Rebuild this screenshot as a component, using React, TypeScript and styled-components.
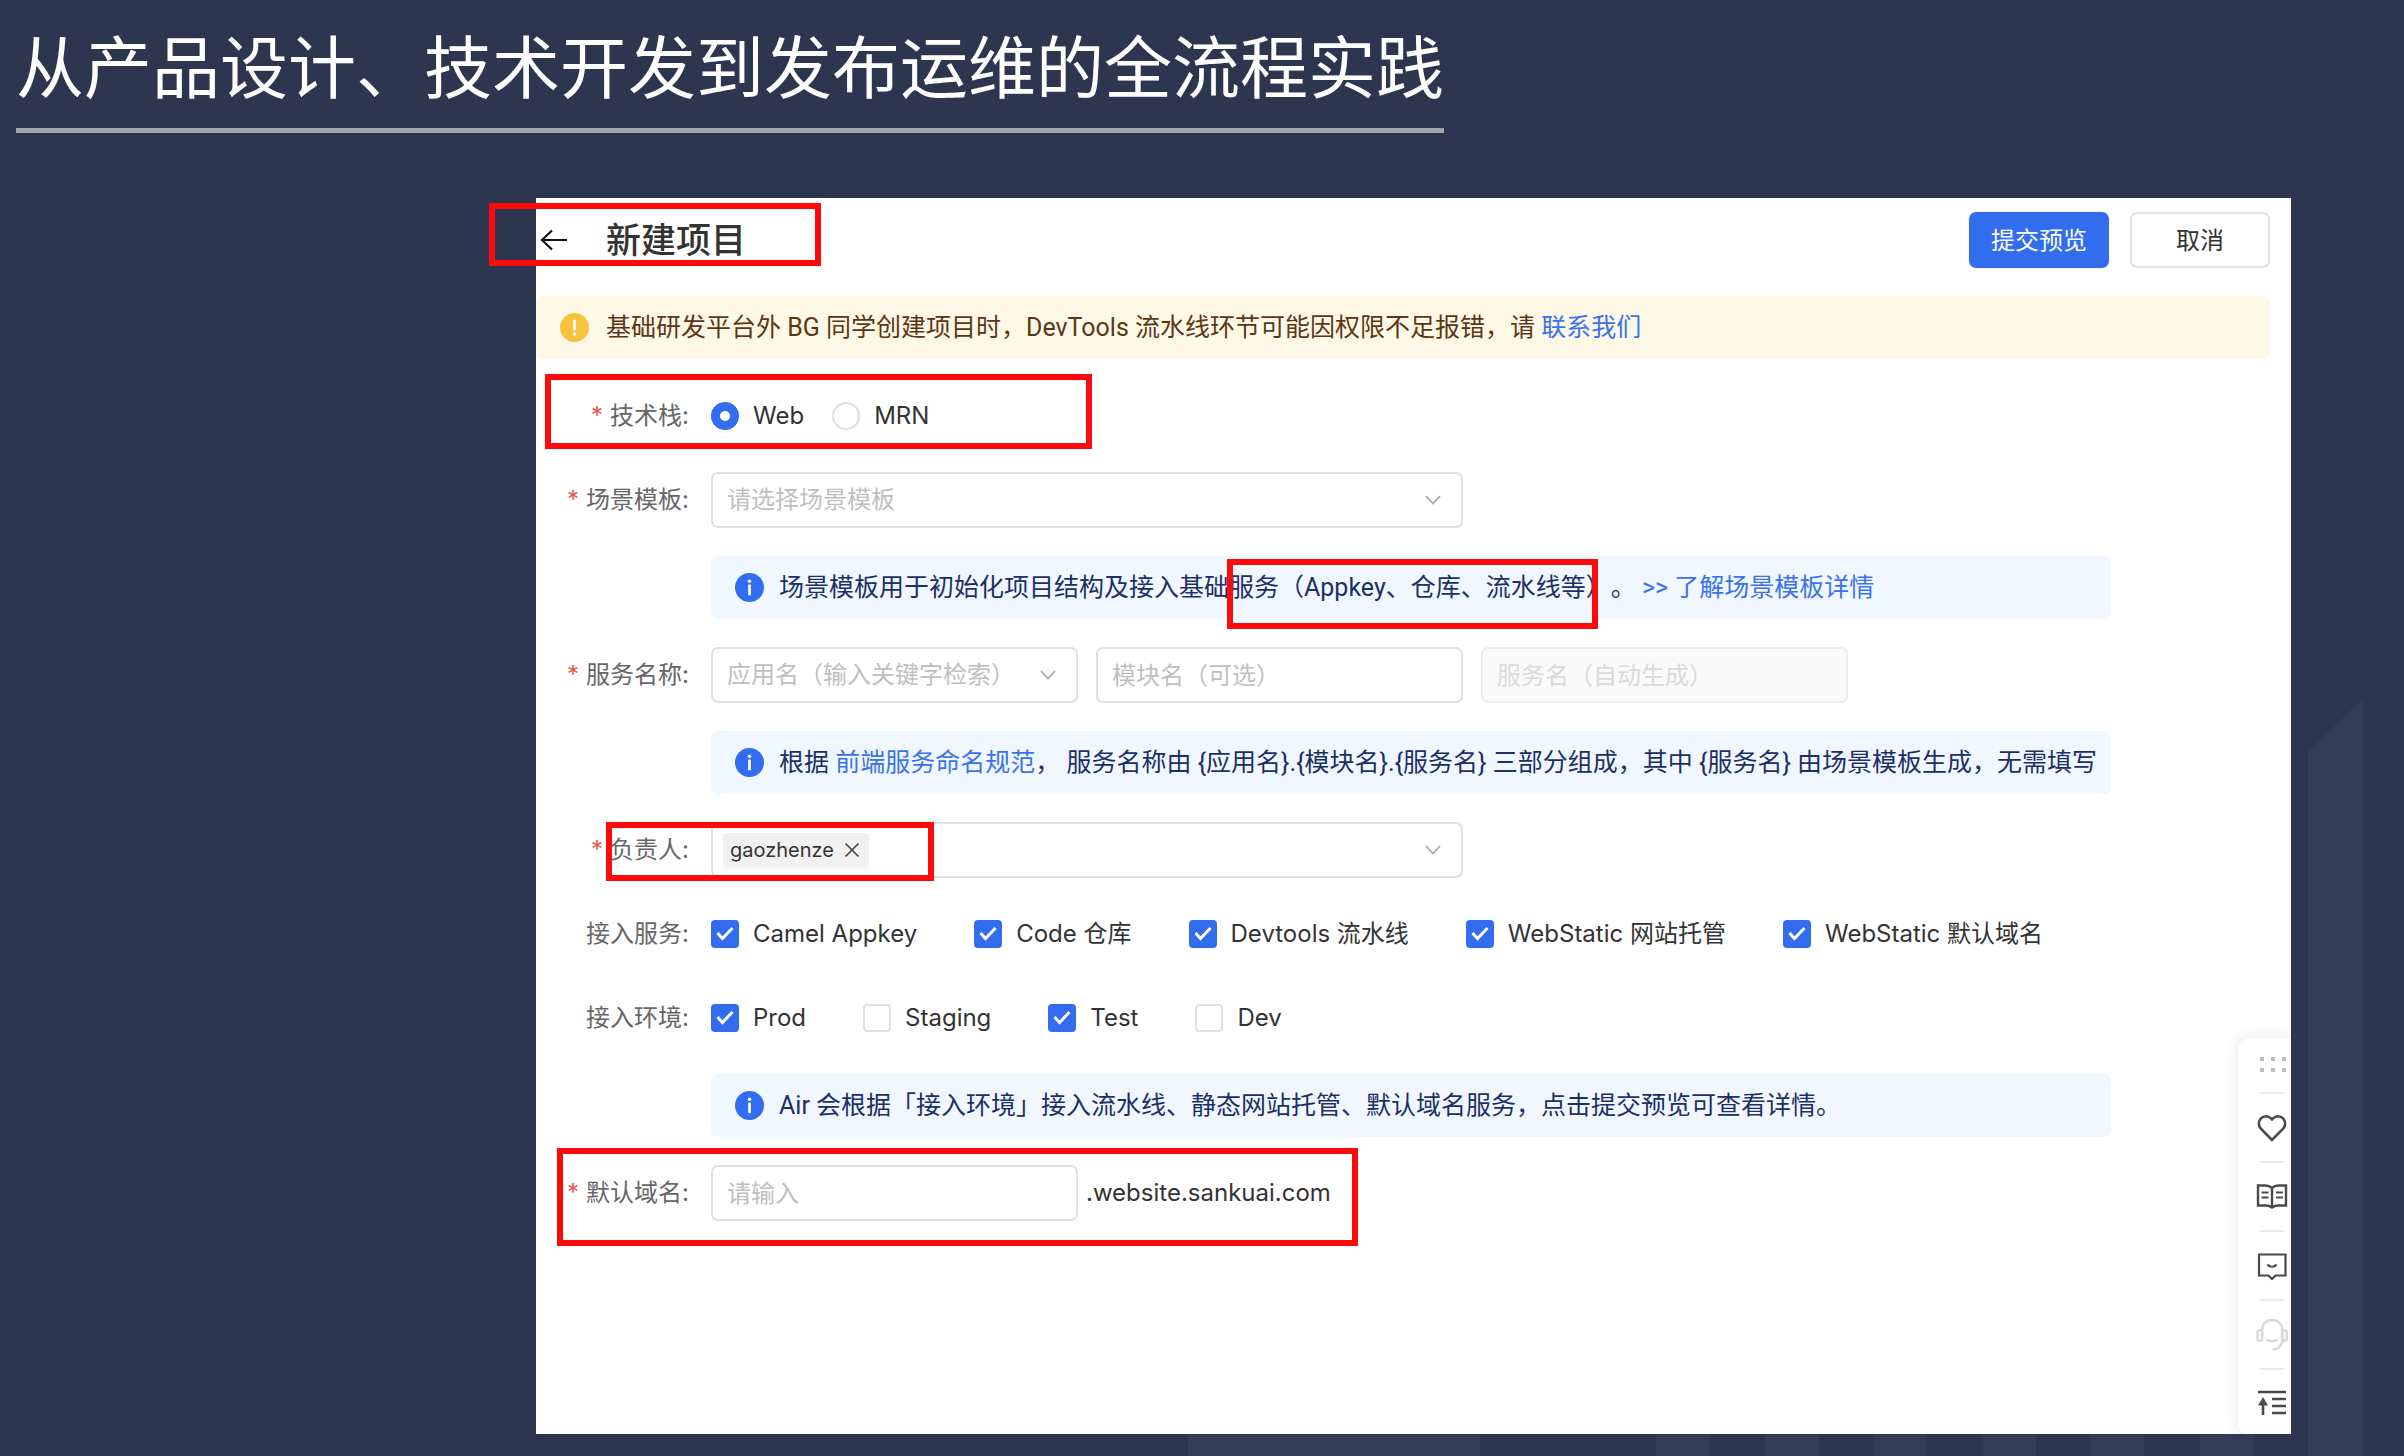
import React, { useState } from "react";
import styled, { createGlobalStyle, css } from "styled-components";

const BLUE = "#316dee";

const GlobalStyle = createGlobalStyle`
  *, *::before, *::after { box-sizing: border-box; }
  body {
    margin: 0;
    background: #2c374f;
    font-family: Inter, "Noto Sans CJK SC", sans-serif;
    font-size: 24px;
    line-height: 36px;
    color: #333;
    text-spacing-trim: space-all;
  }
  button, input, select { font: inherit; color: inherit; margin: 0; }
  a { color: #3a72ee; text-decoration: none; }
  svg { display: block; flex: none; }
`;

const Slide = styled.div`
  position: relative;
  display: flex;
  flex-direction: column;
  min-height: 100vh;
  padding: 16px 113px 22px 16px;
  overflow: hidden;
`;

const Backdrop = styled.svg`
  position: absolute;
  right: 0;
  bottom: 0;
  fill: #323d55;
`;

const SlideTitle = styled.h1`
  align-self: flex-start;
  margin: 0 0 65px;
  padding-bottom: 16px;
  border-bottom: 5px solid #a3a6ab;
  color: #fff;
  font-family: "Noto Sans CJK SC", sans-serif;
  font-size: 68px;
  line-height: 96px;
  font-weight: 400;
  white-space: nowrap;
`;

const Panel = styled.main`
  position: relative;
  flex: 1;
  display: flex;
  flex-direction: column;
  gap: 28px;
  margin-left: 520px;
  padding: 14px 21px 28px 0;
  background: #fff;
`;

const Header = styled.header`
  display: flex;
  align-items: center;
  gap: 21px;
`;

const BackButton = styled.button`
  display: flex;
  padding: 0;
  margin: 0 17px 0 4px;
  border: 0;
  background: none;
  color: #111;
`;

const PageTitle = styled.h2`
  flex: 1;
  margin: 0;
  font-size: 35px;
  line-height: 56px;
  font-weight: 500;
`;

const Button = styled.button<{ $primary?: boolean }>`
  width: 140px;
  height: 56px;
  padding: 1px 0 0;
  border: 2px solid ${(p) => (p.$primary ? BLUE : "#e2e2e2")};
  border-radius: 7px;
  background: ${(p) => (p.$primary ? BLUE : "#fff")};
  color: ${(p) => (p.$primary ? "#fff" : "#333")};
`;

const Notice = styled.p<{ $warning?: boolean }>`
  display: flex;
  align-items: center;
  gap: ${(p) => (p.$warning ? 17 : 15)}px;
  min-height: 63px;
  margin: 0;
  padding: 0 12px 0 24px;
  border-radius: 7px;
  background: ${(p) => (p.$warning ? "#fef8e6" : "#f0f7ff")};
  color: ${(p) => (p.$warning ? "#5c3614" : "#1c2f66")};
  font-family: Roboto, "Noto Sans CJK SC", sans-serif;
  font-size: 25px;
`;

const Form = styled.form`
  display: grid;
  grid-template-columns: 153px minmax(0, 1400px);
  column-gap: 22px;
  row-gap: 28px;
  margin-top: 1px;
`;

const Label = styled.label<{ $required?: boolean }>`
  display: flex;
  align-items: center;
  justify-content: flex-end;
  gap: 7px;
  height: 56px;
  color: #666;
  white-space: nowrap;
  ${(p) =>
    p.$required &&
    css`
      &::before {
        content: "*";
        color: #e8584f;
      }
    `}
`;

const Field = styled.div<{ $gap?: number }>`
  grid-column: 2;
  display: flex;
  align-items: center;
  gap: ${(p) => p.$gap ?? 18}px;
  min-height: 56px;
`;

const HelpRow = styled.div`
  grid-column: 2;
`;

const control = css`
  width: 100%;
  height: 56px;
  padding: 0 14px;
  border: 2px solid #e0e0e0;
  border-radius: 7px;
  background: #fff;
  outline: 0;
`;

const ControlBox = styled.div<{ $wide?: boolean }>`
  display: grid;
  align-items: center;
  width: ${(p) => (p.$wide ? 752 : 367)}px;
  & > * {
    grid-area: 1 / 1;
  }
  & > svg {
    justify-self: end;
    margin-right: 22px;
    pointer-events: none;
  }
`;

const SelectInput = styled.select`
  ${control}
  appearance: none;
  color: #bfbfbf;
`;

const TextInput = styled.input`
  ${control}
  &::placeholder {
    color: #bfbfbf;
    opacity: 1;
  }
  &:disabled {
    background: #fafafa;
    border-color: #ececec;
  }
  &:disabled::placeholder {
    color: #dadada;
  }
`;

const TagBox = styled.div`
  ${control}
  display: flex;
  align-items: center;
  padding: 0 56px 0 10px;
`;

const Tag = styled.span`
  display: flex;
  align-items: center;
  gap: 10px;
  height: 35px;
  padding: 0 9px 0 7px;
  border-radius: 4px;
  background: #f1f1f1;
  font-size: 20px;
`;

const TagRemove = styled.button`
  display: flex;
  padding: 0;
  border: 0;
  background: none;
`;

const TagSearch = styled.input`
  flex: 1;
  min-width: 0;
  border: 0;
  outline: 0;
  background: none;
`;

const Option = styled.label`
  display: flex;
  align-items: center;
  gap: 14px;
  white-space: nowrap;
`;

const Radio = styled.input`
  appearance: none;
  width: 28px;
  height: 28px;
  border: 2px solid #e0e0e0;
  border-radius: 50%;
  background: #fff;
  &:checked {
    border: 9px solid ${BLUE};
  }
`;

const Tick = styled.span`
  display: grid;
  place-items: center;
  & > * {
    grid-area: 1 / 1;
  }
  & > svg {
    pointer-events: none;
  }
`;

const TickInput = styled.input`
  appearance: none;
  width: 28px;
  height: 28px;
  border: 2px solid #e0e0e0;
  border-radius: 4px;
  background: #fff;
  &:checked {
    border-color: ${BLUE};
    background: ${BLUE};
  }
`;

const Suffix = styled.span`
  margin-left: -10px;
`;

const SideBar = styled.nav`
  position: absolute;
  right: 0;
  bottom: 0;
  display: flex;
  flex-direction: column;
  width: 53px;
  padding: 0 3px 0 18px;
  border-radius: 12px 0 0 8px;
  background: #fff;
  box-shadow: 0 0 16px rgba(0, 0, 0, 0.1);
  clip-path: inset(-20px 0 0 -20px);
`;

const SideButton = styled.button<{ $height?: number }>`
  display: flex;
  align-items: center;
  justify-content: center;
  width: 32px;
  height: ${(p) => p.$height ?? 67}px;
  padding: 0;
  border: 0;
  background: none;
  color: #4a4a4a;
`;

const SideRule = styled.hr`
  width: 24px;
  height: 2px;
  margin: 0 4px;
  border: 0;
  background: #ebebeb;
`;

const Highlight = styled.div<{ $x: number; $y: number; $w: number; $h: number }>`
  position: absolute;
  left: ${(p) => p.$x}px;
  top: ${(p) => p.$y}px;
  width: ${(p) => p.$w}px;
  height: ${(p) => p.$h}px;
  border: 6px solid #ff0a0a;
  pointer-events: none;
`;

const Chevron = () => (
  <svg width="16" height="16" viewBox="0 0 16 16" fill="none" stroke="#a6a6a6" strokeWidth="1.8">
    <path d="M1 4l7 7.500L15 4" />
  </svg>
);

const InfoIcon = () => (
  <svg width="29" height="29" viewBox="0 0 30 30">
    <circle cx="15" cy="15" r="15" fill={BLUE} />
    <circle cx="15" cy="8.5" r="1.8" fill="#fff" />
    <path d="M15 12v11" stroke="#fff" strokeWidth="2.8" />
  </svg>
);

const WarnIcon = () => (
  <svg width="29" height="29" viewBox="0 0 30 30">
    <circle cx="15" cy="15" r="15" fill="#f6c33c" />
    <path d="M15 7v11" stroke="#fff" strokeWidth="2.8" />
    <circle cx="15" cy="21.8" r="1.8" fill="#fff" />
  </svg>
);

const Check = ({ label, on }: { label: string; on: boolean }) => {
  const [checked, setChecked] = useState(on);
  return (
    <Option>
      <Tick>
        <TickInput type="checkbox" checked={checked} onChange={() => setChecked(!checked)} />
        {checked && (
          <svg width="28" height="28" viewBox="0 0 28 28" fill="none" stroke="#fff" strokeWidth="3">
            <path d="M6.500 13l5 5.500L21.500 8" />
          </svg>
        )}
      </Tick>
      {label}
    </Option>
  );
};

const services = ["Camel Appkey", "Code 仓库", "Devtools 流水线", "WebStatic 网站托管", "WebStatic 默认域名"];

const environments = [
  { label: "Prod", on: true },
  { label: "Staging", on: false },
  { label: "Test", on: true },
  { label: "Dev", on: false },
];

const highlights = [
  { x: -47, y: 5, w: 332, h: 63 },
  { x: 9, y: 176, w: 547, h: 75 },
  { x: 691, y: 361, w: 371, h: 70 },
  { x: 70, y: 624, w: 328, h: 59 },
  { x: 21, y: 950, w: 801, h: 98 },
];

const stripes = [1656, 1765, 1873, 1982, 2090, 2200];

export default function App() {
  const [stack, setStack] = useState("Web");
  const [owners, setOwners] = useState(["gaozhenze"]);

  return (
    <>
      <GlobalStyle />
      <Slide>
        <Backdrop width="2404" height="760" viewBox="0 0 2404 760" aria-hidden="true">
          <path d="M2308 56L2363 2V760H2308z" />
          <rect x="1188" y="720" width="292" height="40" />
          {stripes.map((x) => (
            <rect key={x} x={x} y="720" width="54" height="40" />
          ))}
        </Backdrop>

        <SlideTitle>从产品设计、技术开发到发布运维的全流程实践</SlideTitle>

        <Panel>
          <Header>
            <BackButton type="button" aria-label="返回">
              <svg width="28" height="28" viewBox="0 0 28 28" fill="none" stroke="currentColor" strokeWidth="2.2">
                <path d="M27 14H2M12 4.500L2 14l10 9.500" />
              </svg>
            </BackButton>
            <PageTitle>新建项目</PageTitle>
            <Button type="submit" form="project" $primary>
              提交预览
            </Button>
            <Button type="button">取消</Button>
          </Header>

          <Notice $warning>
            <WarnIcon />
            <span>
              基础研发平台外 BG 同学创建项目时，DevTools 流水线环节可能因权限不足报错，请 <a href="#contact">联系我们</a>
            </span>
          </Notice>

          <Form id="project" onSubmit={(e) => e.preventDefault()}>
            <Label as="span" id="stack-label" $required>
              技术栈:
            </Label>
            <Field role="radiogroup" aria-labelledby="stack-label" $gap={28}>
              {["Web", "MRN"].map((name) => (
                <Option key={name}>
                  <Radio type="radio" name="stack" checked={stack === name} onChange={() => setStack(name)} />
                  {name}
                </Option>
              ))}
            </Field>

            <Label htmlFor="template" $required>
              场景模板:
            </Label>
            <Field>
              <ControlBox $wide>
                <SelectInput id="template">
                  <option>请选择场景模板</option>
                </SelectInput>
                <Chevron />
              </ControlBox>
            </Field>
            <HelpRow>
              <Notice>
                <InfoIcon />
                <span>
                  场景模板用于初始化项目结构及接入基础服务（Appkey、仓库、流水线等）。{" "}
                  <a href="#template-help">&gt;&gt; 了解场景模板详情</a>
                </span>
              </Notice>
            </HelpRow>

            <Label htmlFor="app-name" $required>
              服务名称:
            </Label>
            <Field>
              <ControlBox>
                <SelectInput id="app-name">
                  <option>应用名（输入关键字检索）</option>
                </SelectInput>
                <Chevron />
              </ControlBox>
              <ControlBox>
                <TextInput aria-label="模块名" placeholder="模块名（可选）" />
              </ControlBox>
              <ControlBox>
                <TextInput aria-label="服务名" placeholder="服务名（自动生成）" disabled />
              </ControlBox>
            </Field>
            <HelpRow>
              <Notice>
                <InfoIcon />
                <span>
                  根据 <a href="#naming">前端服务命名规范</a>， 服务名称由 {"{应用名}.{模块名}.{服务名}"} 三部分组成，其中{" "}
                  {"{服务名}"} 由场景模板生成，无需填写
                </span>
              </Notice>
            </HelpRow>

            <Label htmlFor="owner" $required>
              负责人:
            </Label>
            <Field>
              <ControlBox $wide>
                <TagBox>
                  {owners.map((owner) => (
                    <Tag key={owner}>
                      {owner}
                      <TagRemove
                        type="button"
                        aria-label={`移除 ${owner}`}
                        onClick={() => setOwners(owners.filter((o) => o !== owner))}
                      >
                        <svg width="16" height="16" viewBox="0 0 16 16" fill="none" stroke="#444" strokeWidth="1.6">
                          <path d="M1.500 1.500l13 13M14.500 1.500l-13 13" />
                        </svg>
                      </TagRemove>
                    </Tag>
                  ))}
                  <TagSearch id="owner" />
                </TagBox>
                <Chevron />
              </ControlBox>
            </Field>

            <Label as="span" id="services-label">
              接入服务:
            </Label>
            <Field role="group" aria-labelledby="services-label" $gap={57}>
              {services.map((name) => (
                <Check key={name} label={name} on />
              ))}
            </Field>

            <Label as="span" id="env-label">
              接入环境:
            </Label>
            <Field role="group" aria-labelledby="env-label" $gap={57}>
              {environments.map((env) => (
                <Check key={env.label} label={env.label} on={env.on} />
              ))}
            </Field>
            <HelpRow>
              <Notice>
                <InfoIcon />
                <span>Air 会根据「接入环境」接入流水线、静态网站托管、默认域名服务，点击提交预览可查看详情。</span>
              </Notice>
            </HelpRow>

            <Label htmlFor="domain" $required>
              默认域名:
            </Label>
            <Field>
              <ControlBox>
                <TextInput id="domain" placeholder="请输入" />
              </ControlBox>
              <Suffix>.website.sankuai.com</Suffix>
            </Field>
          </Form>

          <SideBar aria-label="工具">
            <SideButton type="button" aria-label="拖动" $height={54}>
              <svg width="32" height="20" viewBox="0 0 32 20" fill="#bdbdbd">
                {[4, 15, 26].map((x) => (
                  <React.Fragment key={x}>
                    <rect x={x} y="2" width="4" height="4" />
                    <rect x={x} y="13" width="4" height="4" />
                  </React.Fragment>
                ))}
              </svg>
            </SideButton>
            <SideRule />
            <SideButton type="button" aria-label="收藏">
              <svg width="32" height="32" viewBox="0 0 32 32" fill="none" stroke="currentColor" strokeWidth="2.6">
                <path d="M16 28L4.900 16.600a7.400 7.400 0 0 1 0-10.300 7.200 7.200 0 0 1 10.200 0l.9 1 .9-1a7.200 7.200 0 0 1 10.200 0 7.400 7.400 0 0 1 0 10.300z" />
              </svg>
            </SideButton>
            <SideRule />
            <SideButton type="button" aria-label="文档">
              <svg width="32" height="32" viewBox="0 0 32 32" fill="none" stroke="currentColor" strokeWidth="2.4">
                <path d="M16 7c-2-1.800-4-2.500-6.500-2.500H2v20h8c2.500 0 4 .5 6 2 2-1.500 3.500-2 6-2h8v-20h-7.500C20 4.500 18 5.200 16 7zM16 7v19" />
                <path d="M5.500 11.500h7M5.500 16.500h7M20 11.500h7M20 16.500h7" strokeWidth="2" />
              </svg>
            </SideButton>
            <SideRule />
            <SideButton type="button" aria-label="反馈">
              <svg width="32" height="32" viewBox="0 0 32 32" fill="none" stroke="currentColor" strokeWidth="2.2">
                <path d="M3 4.500h26.500v21H19.500L16 29 12.500 25.500H3z" />
                <path d="M11.500 14.500c2.500 3 6.500 3 9 0" />
              </svg>
            </SideButton>
            <SideRule />
            <SideButton type="button" aria-label="客服">
              <svg width="32" height="34" viewBox="0 0 32 34" fill="none" stroke="#d9d9d9" strokeWidth="2.4">
                <path d="M6 12.500C6 6.500 10 2 16 2s10.500 4.500 10.500 10.500V21c0 6-4 10.500-10 10.500" />
                <rect x="1.500" y="12.500" width="4.800" height="10" rx="1.500" />
                <rect x="26" y="12.500" width="4.800" height="10" rx="1.500" />
                <path d="M10.500 21.500c3 2 8 2 11 0" />
              </svg>
            </SideButton>
            <SideRule />
            <SideButton type="button" aria-label="回到顶部" $height={64}>
              <svg width="32" height="32" viewBox="0 0 32 32" fill="none" stroke="currentColor" strokeWidth="2.6">
                <path d="M2 6h28M16 13h14M16 20h14M16 27h14M7 29V15" />
                <path d="M7 11l5 8.500H2z" fill="currentColor" stroke="none" />
              </svg>
            </SideButton>
          </SideBar>

          {highlights.map((h) => (
            <Highlight key={h.y} $x={h.x} $y={h.y} $w={h.w} $h={h.h} />
          ))}
        </Panel>
      </Slide>
    </>
  );
}
